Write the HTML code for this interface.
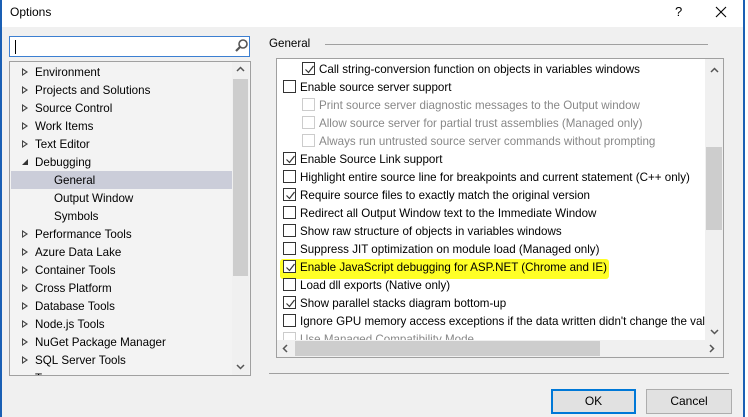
<!DOCTYPE html>
<html><head><style>
*{margin:0;padding:0;box-sizing:border-box}
body{width:748px;height:417px;background:#f0f0f0;font-family:"Liberation Sans",sans-serif;font-size:11.6px;color:#000;position:relative;overflow:hidden}
.a{position:absolute}
.title{left:0;top:0;width:748px;height:27px;background:#fff}
.row{position:absolute;height:18px;line-height:20px;white-space:nowrap}
.tri{position:absolute;left:21px;top:5px;width:0;height:0;border-left:6px solid #444;border-top:4px solid transparent;border-bottom:4px solid transparent}
.tri:after{content:"";position:absolute;left:-5px;top:-2px;border-left:3px solid #f3f3f3;border-top:2px solid transparent;border-bottom:2px solid transparent}
.cb{position:absolute;width:13px;height:13px;border:1px solid #333;background:#fff;top:2px}
.cb.d{border-color:#ccc}
.cb svg{position:absolute;left:1px;top:1px}
.g{color:#888}
.btn{position:absolute;height:25px;border:1px solid #adadad;background:#e1e1e1;text-align:center;line-height:23px;font-size:12px}
</style></head><body>
<div class="a title"></div>
<div class="a" style="left:10px;top:5px;font-size:12px">Options</div>
<div class="a" style="left:675px;top:4px;font-size:13px">?</div>
<svg class="a" style="left:715px;top:6px" width="12" height="12"><path d="M1 1L11 11M11 1L1 11" stroke="#000" stroke-width="1.1"/></svg>
<div class="a" style="left:0;top:0;width:2px;height:417px;background:#1a5fb4"></div>
<div class="a" style="left:743px;top:0;width:2px;height:417px;background:#1a5fb4"></div>
<div class="a" style="left:745px;top:0;width:3px;height:417px;background:#fff"></div>

<div class="a" style="left:9px;top:36px;width:241px;height:21px;border:1px solid #3c7fd1;background:#fff"></div>
<div class="a" style="left:15px;top:40px;width:1px;height:14px;background:#000"></div>
<svg class="a" style="left:234px;top:38px" width="15" height="15"><circle cx="9" cy="6" r="4" fill="none" stroke="#555" stroke-width="1.6"/><path d="M6 9L2 13" stroke="#555" stroke-width="2.2"/></svg>

<div class="a" style="left:9px;top:61px;width:242px;height:315px;border:1px solid #a0a0a0;background:#f3f3f3;overflow:hidden">
 <div class="a" style="left:1px;top:109px;width:221px;height:18px;background:#cbcdd9"></div>
 <div class="a" style="left:222px;top:0;width:17px;height:313px;background:#f0f0f0"></div>
 <div class="a" style="left:223px;top:17px;width:15px;height:197px;background:#cdcdcd"></div>
 <svg class="a" style="left:226px;top:4px" width="9" height="6"><path d="M1 5L4.5 1.5L8 5" fill="none" stroke="#555" stroke-width="1.5"/></svg>
 <svg class="a" style="left:226px;top:302px" width="9" height="6"><path d="M1 1L4.5 4.5L8 1" fill="none" stroke="#555" stroke-width="1.5"/></svg>
 <div class="row" style="top:1px"><span class="tri" style="left:12px"></span><span style="position:absolute;left:25px">Environment</span></div>
 <div class="row" style="top:19px"><span class="tri" style="left:12px"></span><span style="position:absolute;left:25px">Projects&nbsp;and&nbsp;Solutions</span></div>
 <div class="row" style="top:37px"><span class="tri" style="left:12px"></span><span style="position:absolute;left:25px">Source&nbsp;Control</span></div>
 <div class="row" style="top:55px"><span class="tri" style="left:12px"></span><span style="position:absolute;left:25px">Work&nbsp;Items</span></div>
 <div class="row" style="top:73px"><span class="tri" style="left:12px"></span><span style="position:absolute;left:25px">Text&nbsp;Editor</span></div>
 <div class="row" style="top:91px"><svg style="position:absolute;left:11px;top:5px" width="8" height="8"><path d="M7 1L7 7L1 7Z" fill="#333"/></svg><span style="position:absolute;left:25px">Debugging</span></div>
 <div class="row" style="top:109px"><span style="position:absolute;left:44px">General</span></div>
 <div class="row" style="top:127px"><span style="position:absolute;left:44px">Output&nbsp;Window</span></div>
 <div class="row" style="top:145px"><span style="position:absolute;left:44px">Symbols</span></div>
 <div class="row" style="top:163px"><span class="tri" style="left:12px"></span><span style="position:absolute;left:25px">Performance&nbsp;Tools</span></div>
 <div class="row" style="top:181px"><span class="tri" style="left:12px"></span><span style="position:absolute;left:25px">Azure&nbsp;Data&nbsp;Lake</span></div>
 <div class="row" style="top:199px"><span class="tri" style="left:12px"></span><span style="position:absolute;left:25px">Container&nbsp;Tools</span></div>
 <div class="row" style="top:217px"><span class="tri" style="left:12px"></span><span style="position:absolute;left:25px">Cross&nbsp;Platform</span></div>
 <div class="row" style="top:235px"><span class="tri" style="left:12px"></span><span style="position:absolute;left:25px">Database&nbsp;Tools</span></div>
 <div class="row" style="top:253px"><span class="tri" style="left:12px"></span><span style="position:absolute;left:25px">Node.js&nbsp;Tools</span></div>
 <div class="row" style="top:271px"><span class="tri" style="left:12px"></span><span style="position:absolute;left:25px">NuGet&nbsp;Package&nbsp;Manager</span></div>
 <div class="row" style="top:289px"><span class="tri" style="left:12px"></span><span style="position:absolute;left:25px">SQL&nbsp;Server&nbsp;Tools</span></div>
 <div class="row" style="top:307px"><span style="position:absolute;left:25px">T</span></div>
</div>

<div class="a" style="left:269px;top:37px">General</div>
<div class="a" style="left:325px;top:44px;width:383px;height:1px;background:#a0a0a0"></div>
<div class="a" style="left:276px;top:58px;width:448px;height:300px;border:1px solid #a0a0a0;background:#fff;overflow:hidden">
 <div class="a" style="left:0;top:0;width:428px;height:281px;overflow:hidden">
  <div class="a" style="left:3px;top:200px;width:329px;height:20px;background:#ffff26;border-radius:3px"></div>
  <div id="rows"></div>
 </div>
 <div class="a" style="left:428px;top:0;width:18px;height:281px;background:#f0f0f0"></div>
 <div class="a" style="left:429px;top:88px;width:16px;height:83px;background:#cdcdcd"></div>
 <svg class="a" style="left:433px;top:8px" width="9" height="6"><path d="M1 5L4.5 1.5L8 5" fill="none" stroke="#555" stroke-width="1.5"/></svg>
 <svg class="a" style="left:433px;top:270px" width="9" height="6"><path d="M1 1L4.5 4.5L8 1" fill="none" stroke="#555" stroke-width="1.5"/></svg>
 <div class="a" style="left:0;top:281px;width:446px;height:17px;background:#f0f0f0"></div>
 <div class="a" style="left:18px;top:282px;width:305px;height:15px;background:#cdcdcd"></div>
 <svg class="a" style="left:5px;top:285px" width="6" height="9"><path d="M5 1L1.5 4.5L5 8" fill="none" stroke="#555" stroke-width="1.5"/></svg>
 <svg class="a" style="left:432px;top:285px" width="6" height="9"><path d="M1 1L4.5 4.5L1 8" fill="none" stroke="#555" stroke-width="1.5"/></svg>
</div>
<div class="a" style="left:269px;top:373px;width:460px;height:1px;background:#a0a0a0"></div>
<div class="btn" style="left:551px;top:389px;width:85px;border:2px solid #0078d7;line-height:21px">OK</div>
<div class="btn" style="left:646px;top:389px;width:86px">Cancel</div>

<script>
var R=[[1,1,0,"Call string-conversion function on objects in variables windows"],
[0,0,0,"Enable source server support"],
[1,0,1,"Print source server diagnostic messages to the Output window"],
[1,0,1,"Allow source server for partial trust assemblies (Managed only)"],
[1,0,1,"Always run untrusted source server commands without prompting"],
[0,1,0,"Enable Source Link support"],
[0,0,0,"Highlight entire source line for breakpoints and current statement (C++ only)"],
[0,1,0,"Require source files to exactly match the original version"],
[0,0,0,"Redirect all Output Window text to the Immediate Window"],
[0,0,0,"Show raw structure of objects in variables windows"],
[0,0,0,"Suppress JIT optimization on module load (Managed only)"],
[0,1,0,"Enable JavaScript debugging for ASP.NET (Chrome and IE)"],
[0,0,0,"Load dll exports (Native only)"],
[0,1,0,"Show parallel stacks diagram bottom-up"],
[0,0,0,"Ignore GPU memory access exceptions if the data written didn't change the value"],
[0,0,1,"Use Managed Compatibility Mode"]];
var h="";R.forEach(function(r,i){var x=r[0]?25:6,t=1+i*18;
h+='<div class="row" style="top:'+t+'px;left:'+x+'px"><span class="cb'+(r[2]?' d':'')+'" style="left:0">'+(r[1]?'<svg width="11" height="11"><path d="M1.5 5.5L4.5 8.5L9.5 2" fill="none" stroke="#333" stroke-width="1.2"/></svg>':'')+'</span><span class="'+(r[2]?'g':'')+'" style="position:absolute;left:17px">'+r[3]+'</span></div>';});
document.getElementById("rows").innerHTML=h;
</script>
</body></html>
